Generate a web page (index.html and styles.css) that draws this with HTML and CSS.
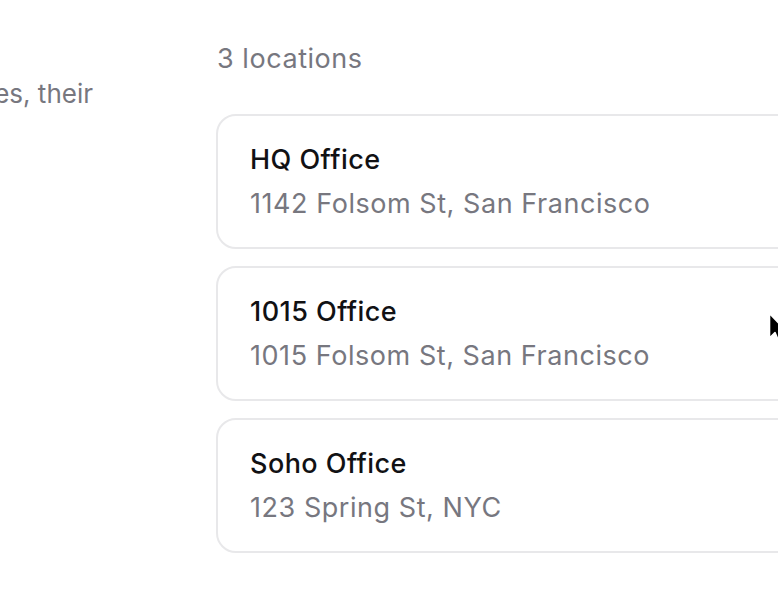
FILE: index.html
```html
<!DOCTYPE html>
<html>
<head>
<meta charset="utf-8">
<link rel="stylesheet" href="styles.css">
</head>
<body>
<div class="page">
  <aside class="side">
    <p class="desc"><span>es, their</span></p>
  </aside>
  <main class="main">
    <div class="count">3 locations</div>
    <ul class="list">
      <li class="card">
        <div class="name">HQ Office</div>
        <div class="addr">1142 Folsom St, San Francisco</div>
      </li>
      <li class="card">
        <div class="name">1015 Office</div>
        <div class="addr">1015 Folsom St, San Francisco</div>
      </li>
      <li class="card">
        <div class="name">Soho Office</div>
        <div class="addr">123 Spring St, NYC</div>
      </li>
    </ul>
  </main>
</div>
<svg class="cursor" width="20" height="34" viewBox="0 0 20 34">
  <path d="M1.5 1.5 L1.5 26 L7 20.5 L11 30 L15 28.3 L11 19 L18.5 19 Z" fill="#000" stroke="#fff" stroke-width="1.6" stroke-linejoin="round"/>
</svg>
</body>
</html>
```
FILE: styles.css
```css
html, body {
  margin: 0;
  padding: 0;
  background: #fff;
  overflow: hidden;
}
body {
  font-family: Inter, "Noto Sans", sans-serif;
  width: 778px;
  height: 610px;
  position: relative;
}
.page {
  display: flex;
  padding-top: 39px;
}
.side {
  width: 216px;
  flex: none;
}
.desc {
  margin: 34.5px 0 0 0;
  width: 93px;
  display: flex;
  justify-content: flex-end;
  font-size: 26px;
  line-height: 40px;
  color: #77777f;
  white-space: nowrap;
}
.desc span {
  flex: none;
}
.main {
  width: 700px;
  flex: none;
}
.count {
  font-size: 27px;
  line-height: 40px;
  letter-spacing: 0.55px;
  color: #77777f;
  padding-left: 1px;
}
.list {
  list-style: none;
  margin: 35px 0 0 0;
  padding: 0;
  display: flex;
  flex-direction: column;
  gap: 17px;
}
.card {
  border: 2px solid #e8e8ea;
  border-radius: 20px;
  padding: 23.5px 32px 23px 32px;
}
.name {
  font-size: 27px;
  line-height: 40px;
  letter-spacing: 0.45px;
  color: #111114;
  font-weight: 500;
}
.addr {
  margin-top: 4.5px;
  font-size: 27px;
  line-height: 40px;
  letter-spacing: 0.55px;
  color: #77777f;
}
.cursor {
  position: absolute;
  left: 768px;
  top: 312px;
}
```
